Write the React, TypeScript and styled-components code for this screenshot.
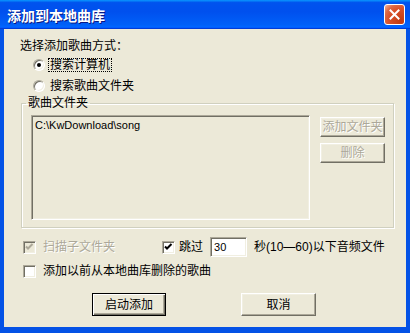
import React from "react";
import styled, { createGlobalStyle, css } from "styled-components";

const Global = createGlobalStyle`
  html, body { margin: 0; padding: 0; background: #fff; }
  body { font-family: "Liberation Sans", "Noto Sans CJK SC", sans-serif; }
`;

const Window = styled.div`
  width: 410px;
  height: 333px;
  display: flex;
  flex-direction: column;
  box-sizing: border-box;
`;

const TitleBar = styled.div`
  height: 29px;
  flex: none;
  display: flex;
  align-items: center;
  justify-content: space-between;
  padding: 0 5px 0 7px;
  background: linear-gradient(180deg, #0997ff 0%, #0053ee 9%, #0050ee 40%, #0060f8 85%, #0066ff 92%, #005bff 95%, #003dd7 97%, #003dd7 100%);
`;

const Title = styled.span`
  color: #fff;
  font-family: "Noto Sans CJK SC", sans-serif;
  font-weight: 700;
  font-size: 14px;
  line-height: 16px;
  text-shadow: 1px 1px #0a1883;
`;

const CloseBtn = styled.div`
  width: 21px;
  height: 21px;
  box-sizing: border-box;
  border: 1px solid #fff;
  border-radius: 3px;
  display: flex;
  align-items: center;
  justify-content: center;
  background: radial-gradient(circle at 85% 85%, #c23a10 0%, #d9512a 55%, #dd6a45 75%, #efa58c 95%);
`;

const Frame = styled.div`
  flex: 1;
  display: flex;
  border-style: solid;
  border-color: #0452e6;
  border-width: 0 4px 6px 4px;
  min-height: 0;
`;

const Client = styled.div`
  flex: 1;
  background: #ece9d8;
  padding: 8px 12px 0 16px;
  display: flex;
  flex-direction: column;
  font-size: 12px;
  color: #000;
  line-height: 14px;
`;

const Heading = styled.div`
  height: 16px;
  line-height: 16px;
  font-family: "Noto Sans CJK SC", sans-serif;
`;

const RadioRow = styled.div<{ $top: number }>`
  display: flex;
  align-items: center;
  height: 14px;
  margin: ${(p) => p.$top}px 0 0 13px;
  gap: 3px;
`;

const sunken = css`
  box-sizing: border-box;
  border: 1px solid;
  border-color: #aca899 #fff #fff #aca899;
  box-shadow: inset 1px 1px #716f64, inset -1px -1px #f1efe2;
`;

const Radio = styled.span<{ $checked?: boolean }>`
  ${sunken};
  position: relative;
  width: 12px;
  height: 12px;
  border-radius: 50%;
  background: #fff;
  flex: none;
  &::after {
    content: "";
    display: ${(p) => (p.$checked ? "block" : "none")};
    position: absolute;
    left: 3px;
    top: 3px;
    width: 4px;
    height: 4px;
    border-radius: 50%;
    background: #000;
  }
`;

const Label = styled.span<{ $focus?: boolean; $disabled?: boolean }>`
  padding: 0 1px;
  border: 1px dotted ${(p) => (p.$focus ? "#000" : "transparent")};
  line-height: 12px;
  white-space: nowrap;
  color: ${(p) => (p.$disabled ? "#aca899" : "#000")};
  text-shadow: ${(p) => (p.$disabled ? "1px 1px #fff" : "none")};
`;

const Group = styled.fieldset`
  margin: 3px 0 0 1px;
  padding: 0 8px 7px 9px;
  border: 1px solid #d0d0bf;
  box-shadow: inset 1px 1px #fff, 1px 1px #fff;
  min-width: 0;
`;

const Legend = styled.legend`
  padding: 0 2px;
  margin-left: -5px;
  line-height: 14px;
  font-size: 12px;
`;

const GroupInner = styled.div`
  display: flex;
  gap: 10px;
  margin-top: 5px;
`;

const ListBox = styled.div`
  ${sunken};
  width: 279px;
  height: 105px;
  background: #ece9d8;
  padding: 2px 3px;
  font-family: "Liberation Sans", sans-serif;
  font-size: 11px;
  line-height: 14px;
`;

const BtnCol = styled.div`
  display: flex;
  flex-direction: column;
  gap: 6px;
  margin-top: 2px;
  width: 65px;
`;

const Button = styled.div<{ $w?: number; $h?: number; $disabled?: boolean; $default?: boolean }>`
  box-sizing: border-box;
  width: ${(p) => p.$w ?? 65}px;
  height: ${(p) => p.$h ?? 20}px;
  display: flex;
  align-items: center;
  justify-content: center;
  background: #ece9d8;
  font-size: 12px;
  white-space: nowrap;
  color: ${(p) => (p.$disabled ? "#aca899" : "#000")};
  text-shadow: ${(p) => (p.$disabled ? "1px 1px #fff" : "none")};
  ${(p) =>
    p.$default
      ? css`
          border: 1px solid #000;
          box-shadow: inset 1px 1px #fff, inset -1px -1px #716f64, inset -2px -2px #aca899;
        `
      : css`
          border: 1px solid;
          border-color: #fff #716f64 #716f64 #fff;
          box-shadow: inset -1px -1px #aca899, inset 1px 1px #f1efe2;
        `}
`;

const OptRow = styled.div<{ $top: number; $h: number }>`
  display: flex;
  align-items: center;
  height: ${(p) => p.$h}px;
  margin-top: ${(p) => p.$top}px;
`;

const OptItem = styled.div<{ $w?: number }>`
  display: flex;
  align-items: center;
  gap: 5px;
  padding-left: 3px;
  ${(p) => (p.$w ? `width: ${p.$w}px; box-sizing: border-box;` : "")}
`;

const Inline = styled.div`
  display: flex;
  align-items: center;
  gap: 2px;
`;

const CheckBox = styled.span<{ $disabled?: boolean }>`
  ${sunken};
  width: 13px;
  height: 13px;
  flex: none;
  background: ${(p) => (p.$disabled ? "#ece9d8" : "#fff")};
  display: flex;
  align-items: center;
  justify-content: center;
`;

const NumInput = styled.div`
  ${sunken};
  width: 37px;
  height: 20px;
  margin: 0 3px;
  background: #fff;
  padding: 0 3px;
  display: flex;
  align-items: center;
  font-family: "Liberation Sans", sans-serif;
  font-size: 11px;
`;

const ActionRow = styled.div`
  display: flex;
  margin-top: 15px;
  padding-left: 72px;
  gap: 75px;
`;

const Check = ({ color }: { color: string }) => (
  <svg width="11" height="11" viewBox="0 0 11 11">
    <polyline points="2,4.5 4,6.5 8.5,2" fill="none" stroke={color} strokeWidth="2" />
  </svg>
);

export default function App() {
  return (
    <>
      <Global />
      <Window>
        <TitleBar>
          <Title>添加到本地曲库</Title>
          <CloseBtn>
            <svg width="11" height="11" viewBox="0 0 11 11">
              <path d="M1.5 1.5 L9.5 9.5 M9.5 1.5 L1.5 9.5" stroke="#fff" strokeWidth="2" strokeLinecap="square" />
            </svg>
          </CloseBtn>
        </TitleBar>
        <Frame>
          <Client>
            <Heading>选择添加歌曲方式：</Heading>
            <RadioRow $top={5}>
              <Radio $checked />
              <Label $focus>搜索计算机</Label>
            </RadioRow>
            <RadioRow $top={7}>
              <Radio />
              <Label>搜索歌曲文件夹</Label>
            </RadioRow>
            <Group>
              <Legend>歌曲文件夹</Legend>
              <GroupInner>
                <ListBox>C:\KwDownload\song</ListBox>
                <BtnCol>
                  <Button $disabled $h={20}>添加文件夹</Button>
                  <Button $disabled $h={20}>删除</Button>
                </BtnCol>
              </GroupInner>
            </Group>
            <OptRow $top={9} $h={20}>
              <OptItem $w={142}>
                <CheckBox $disabled>
                  <Check color="#aca899" />
                </CheckBox>
                <Label $disabled>扫描子文件夹</Label>
              </OptItem>
              <Inline>
                <CheckBox>
                  <Check color="#000" />
                </CheckBox>
                <Label>跳过</Label>
                <NumInput>30</NumInput>
                <Label>秒(10—60)以下音频文件</Label>
              </Inline>
            </OptRow>
            <OptRow $top={7} $h={14}>
              <OptItem>
                <CheckBox />
                <Label>添加以前从本地曲库删除的歌曲</Label>
              </OptItem>
            </OptRow>
            <ActionRow>
              <Button $default $w={74} $h={23}>启动添加</Button>
              <Button $w={75} $h={23}>取消</Button>
            </ActionRow>
          </Client>
        </Frame>
      </Window>
    </>
  );
}
